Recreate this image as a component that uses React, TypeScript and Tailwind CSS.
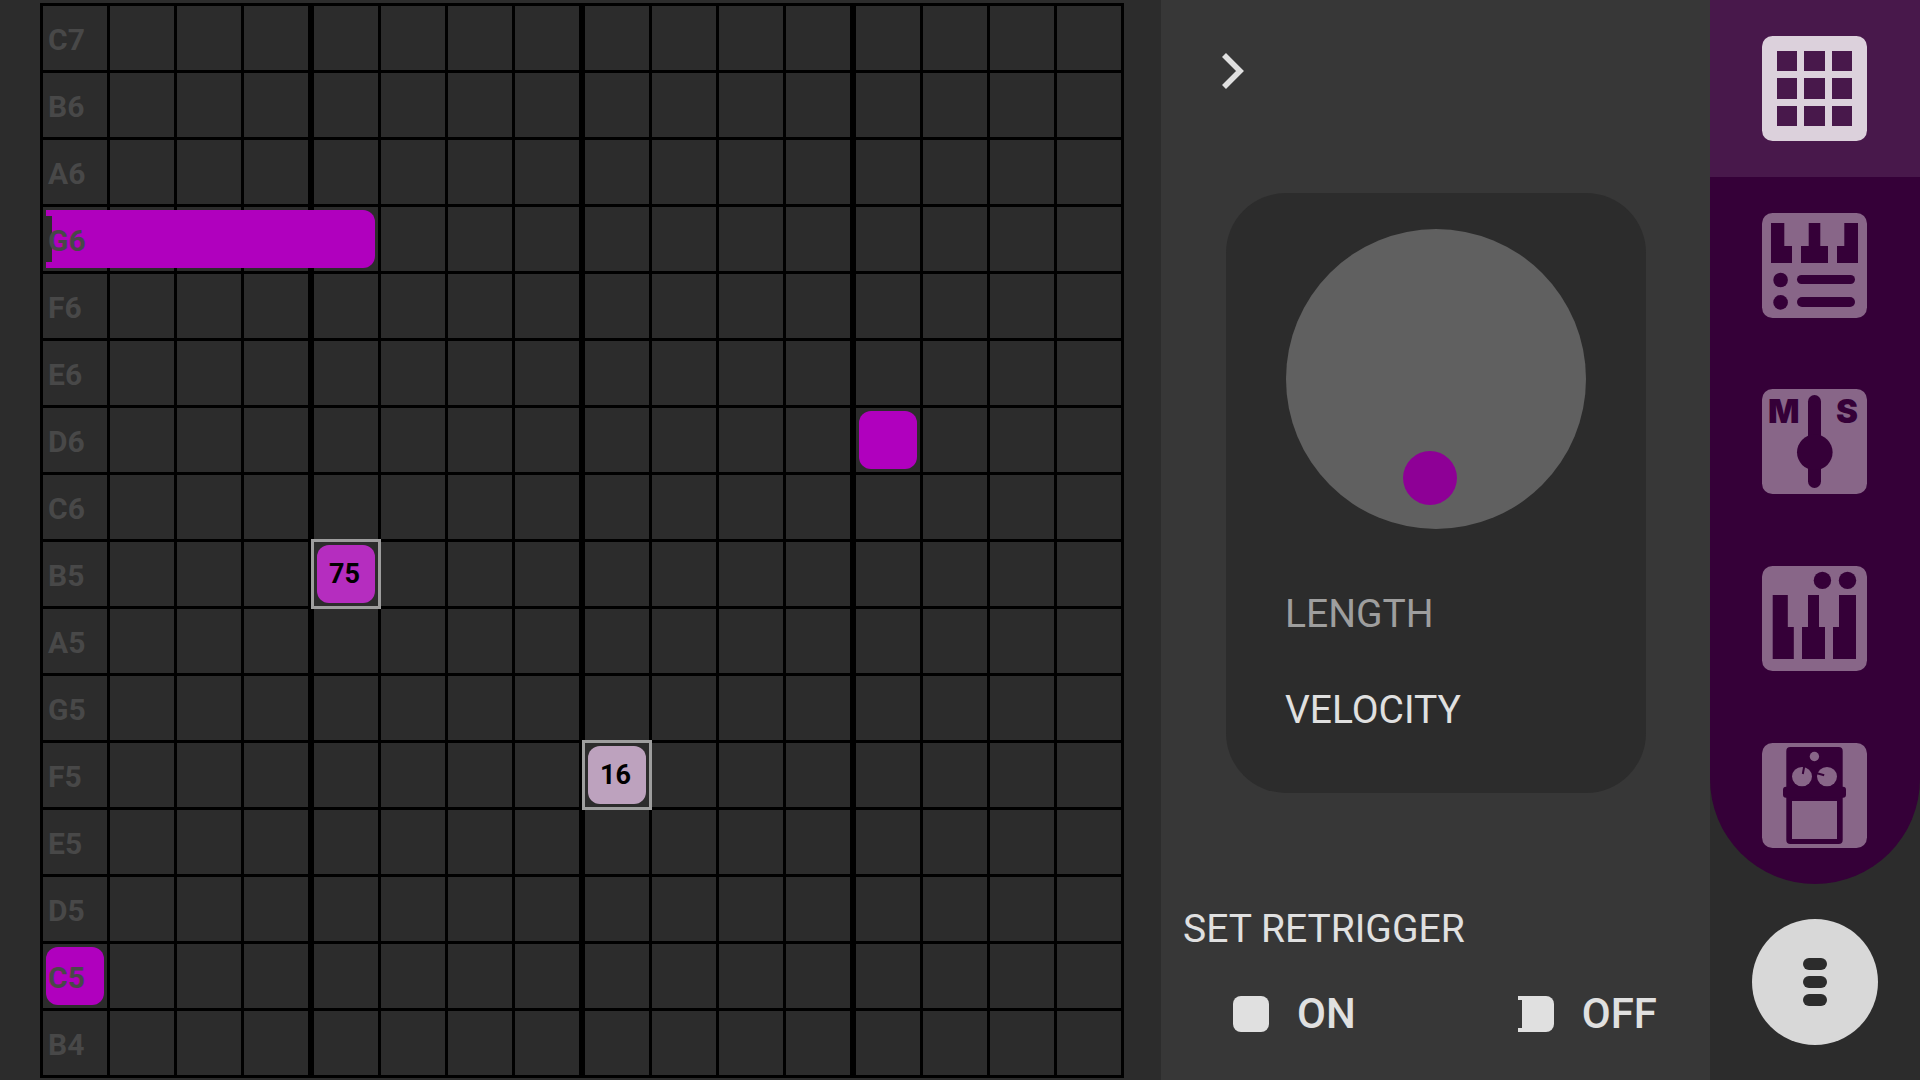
import React, { useState } from "react";

type Note = {
  pitch: string;
  step: number;
  length: number;
  velocity: number;
  retrigger?: boolean;
  selected?: boolean;
};

type Target = "LENGTH" | "VELOCITY";

const PITCHES = [
  "C7", "B6", "A6", "G6", "F6", "E6", "D6", "C6",
  "B5", "A5", "G5", "F5", "E5", "D5", "C5", "B4",
];

const STEPS = Array.from({ length: 16 }, (_, i) => i);

const NOTES: Note[] = [
  { pitch: "G6", step: 0, length: 5, velocity: 100, retrigger: true },
  { pitch: "D6", step: 12, length: 1, velocity: 100 },
  { pitch: "B5", step: 4, length: 1, velocity: 75, selected: true },
  { pitch: "F5", step: 8, length: 1, velocity: 16, selected: true },
  { pitch: "C5", step: 0, length: 1, velocity: 100 },
];

const NOTE_COLORS: Record<number, string> = {
  16: "bg-[#bda2be]",
  75: "bg-[#b52dbf]",
  100: "bg-[#b000be]",
};

// every fourth step is followed by an empty track, which doubles the bar line
const trackOf = (step: number): number => step + Math.floor(step / 4) + 1;

const NoteBlock: React.FC<{ note: Note }> = ({ note }) => {
  const { pitch, step, length, velocity, retrigger, selected } = note;

  return (
    <button
      type="button"
      aria-label={`${pitch} step ${step + 1}`}
      className={`row-start-1 flex bg-transparent ${
        selected
          ? "-m-[3px] border-3 border-[#9e9e9e] p-[3px]"
          : "p-[3px]"
      }`}
      style={{
        gridColumn: `${trackOf(step)} / ${trackOf(step + length - 1) + 1}`,
      }}
    >
      <span
        className={`flex h-full w-full items-center ${NOTE_COLORS[velocity]} ${
          retrigger ? "rounded-r-xl" : "rounded-xl"
        }`}
      >
        {retrigger && <span className="h-[46px] w-1.5 bg-[#2c2c2c]" />}
        {selected && (
          <span className="pl-3 text-[27px] leading-8 font-bold text-black">
            {velocity}
          </span>
        )}
      </span>
    </button>
  );
};

const PianoRoll: React.FC = () => (
  <main className="min-w-0 flex-1 pt-[3px] pr-[37px] pl-10">
    <div className="flex flex-col gap-[3px] border-3 border-black bg-black">
      {PITCHES.map((pitch) => (
        <div
          key={pitch}
          className="grid h-16 grid-cols-[repeat(4,1fr)_0px_repeat(4,1fr)_0px_repeat(4,1fr)_0px_repeat(4,1fr)] gap-x-[3px]"
        >
          {STEPS.map((step) => (
            <div
              key={step}
              className="row-start-1 bg-[#2c2c2c]"
              style={{ gridColumn: trackOf(step) }}
            />
          ))}
          {NOTES.filter((note) => note.pitch === pitch).map((note) => (
            <NoteBlock key={note.step} note={note} />
          ))}
          <span className="pointer-events-none z-10 col-start-1 row-start-1 self-center pt-[3px] pl-[5px] text-[30px] leading-8 font-bold text-[#484848]">
            {pitch}
          </span>
        </div>
      ))}
    </div>
  </main>
);

const EditPanel: React.FC = () => {
  const [target, setTarget] = useState<Target>("VELOCITY");
  const [position, setPosition] = useState<number>(48);

  return (
    <section className="w-[549px] shrink-0 bg-[#373737] text-[#e0e0e0]">
      <button type="button" aria-label="Close panel" className="mt-[53px] ml-[61px] block">
        <svg width="22" height="36" viewBox="0 0 22 36" fill="none">
          <path d="M2 2L18 18L2 34" stroke="#e0e0e0" strokeWidth="5.6" />
        </svg>
      </button>

      <div className="mt-[104px] mr-16 ml-[65px] rounded-[60px] bg-[#2c2c2c] px-[59px] pt-9 pb-[59px]">
        <div className="relative mx-auto size-[300px] rounded-full bg-[#606060]">
          <span
            className="absolute top-[222px] size-[54px] -translate-x-1/2 rounded-full bg-[#8e0096]"
            style={{ left: `${position}%` }}
          />
          <input
            type="range"
            aria-label={target}
            min={20}
            max={80}
            value={position}
            onChange={(event) => setPosition(Number(event.target.value))}
            className="absolute inset-0 size-full cursor-pointer opacity-0"
          />
        </div>
        <div className="mt-[61px] flex flex-col items-start gap-12">
          {(["LENGTH", "VELOCITY"] as Target[]).map((name) => (
            <button
              key={name}
              type="button"
              aria-pressed={target === name}
              onClick={() => setTarget(name)}
              className={`text-[39px] leading-12 ${
                target === name ? "text-[#e0e0e0]" : "text-[#9e9e9e]"
              }`}
            >
              {name}
            </button>
          ))}
        </div>
      </div>

      <h2 className="mt-28 ml-[22px] text-[39px] leading-12">SET RETRIGGER</h2>
      <div className="mt-[37px] mr-[53px] ml-[72px] flex justify-between text-[42px] leading-12 font-medium">
        <button type="button" className="flex items-center gap-7">
          <span className="size-9 rounded-lg bg-[#e0e0e0]" />
          ON
        </button>
        <button type="button" className="flex items-center gap-7">
          <span className="flex size-9 items-center rounded-r-lg bg-[#e0e0e0]">
            <span className="h-7 w-1 bg-[#373737]" />
          </span>
          OFF
        </button>
      </div>
    </section>
  );
};

const PatternIcon: React.FC = () => (
  <g>
    <path d="M15 15h20v20h-20zM42 15h21v20h-21zM70 15h20v20h-20z" />
    <path d="M15 42h20v21h-20zM42 42h21v21h-21zM70 42h20v21h-20z" />
    <path d="M15 70h20v20h-20zM42 70h21v20h-21zM70 70h20v20h-20z" />
  </g>
);

const InstrumentsIcon: React.FC = () => (
  <g>
    <path d="M9 10H22.3V33H30V50H9z" />
    <path d="M46.7 10H58.3V33H66V50H39V33H46.7z" />
    <path d="M82.3 10H96V50H75V33H82.3z" />
    <circle cx="18.6" cy="67" r="7.3" />
    <circle cx="18.6" cy="89.4" r="7.3" />
    <rect x="35" y="62" width="58" height="9" rx="4.5" />
    <rect x="35" y="84" width="58" height="10" rx="5" />
  </g>
);

const MixerIcon: React.FC = () => (
  <g>
    <text x="6" y="34" fontSize="33" className="font-[Inter] font-black">M</text>
    <text x="74" y="34" fontSize="33" className="font-[Inter] font-black">S</text>
    <rect x="46" y="6" width="13" height="93" rx="6.5" />
    <circle cx="52.8" cy="63.3" r="17.8" />
  </g>
);

const SynthIcon: React.FC = () => (
  <g>
    <circle cx="60.4" cy="14.4" r="8.7" />
    <circle cx="85.5" cy="14.4" r="8.7" />
    <path d="M10.7 29H25.8V61H31.8V93H10.7z" />
    <path d="M46 29H57V61H63V93H40V61H46z" />
    <path d="M77 29H94V93H71V61H77z" />
  </g>
);

const EffectsIcon: React.FC = () => (
  <g>
    <rect x="24.3" y="4" width="56.4" height="97" rx="4" />
    <rect x="21" y="43.8" width="63" height="11" rx="3" />
    <g fill="#886688">
      <circle cx="52.4" cy="13.5" r="4.7" />
      <ellipse cx="40" cy="33.6" rx="10" ry="9.6" />
      <ellipse cx="65" cy="33.6" rx="10" ry="9.6" />
      <path d="M30 58h45v38h-45z" />
    </g>
    <path d="M42.2 23.5L40.8 31M55 30.2L62.2 32.3" stroke="#350038" strokeWidth="2" />
  </g>
);

const PAGES = [
  { name: "Pattern", Icon: PatternIcon },
  { name: "Instruments", Icon: InstrumentsIcon },
  { name: "Mixer", Icon: MixerIcon },
  { name: "Synth", Icon: SynthIcon },
  { name: "Effects", Icon: EffectsIcon },
];

const Sidebar: React.FC = () => {
  const [active, setActive] = useState<string>("Pattern");

  return (
    <aside className="flex w-[210px] shrink-0 flex-col">
      <nav className="flex flex-1 flex-col overflow-hidden rounded-b-[105px] bg-[#350038]">
        {PAGES.map(({ name, Icon }) => (
          <button
            key={name}
            type="button"
            aria-label={name}
            onClick={() => setActive(name)}
            className={`flex min-h-0 flex-1 items-center justify-center pr-px ${
              active === name ? "bg-[#48184b]" : ""
            }`}
          >
            <svg width="105" height="105" viewBox="0 0 105 105">
              <rect
                width="105"
                height="105"
                rx="10.5"
                fill={active === name ? "#dcd1dc" : "#886688"}
              />
              <g fill={active === name ? "#48184b" : "#350038"}>
                <Icon />
              </g>
            </svg>
          </button>
        ))}
      </nav>
      <div className="flex justify-center py-[35px]">
        <button
          type="button"
          aria-label="Menu"
          className="flex size-[126px] flex-col items-center justify-center gap-1.5 rounded-full bg-[#d8d8d8]"
        >
          <span className="h-3 w-6 rounded-full bg-[#2c2c2c]" />
          <span className="h-3 w-6 rounded-full bg-[#2c2c2c]" />
          <span className="h-3 w-6 rounded-full bg-[#2c2c2c]" />
        </button>
      </div>
    </aside>
  );
};

const App: React.FC = () => (
  <div className="flex min-h-screen bg-[#2c2c2c] font-[Roboto,sans-serif]">
    <PianoRoll />
    <EditPanel />
    <Sidebar />
  </div>
);

export default App;
